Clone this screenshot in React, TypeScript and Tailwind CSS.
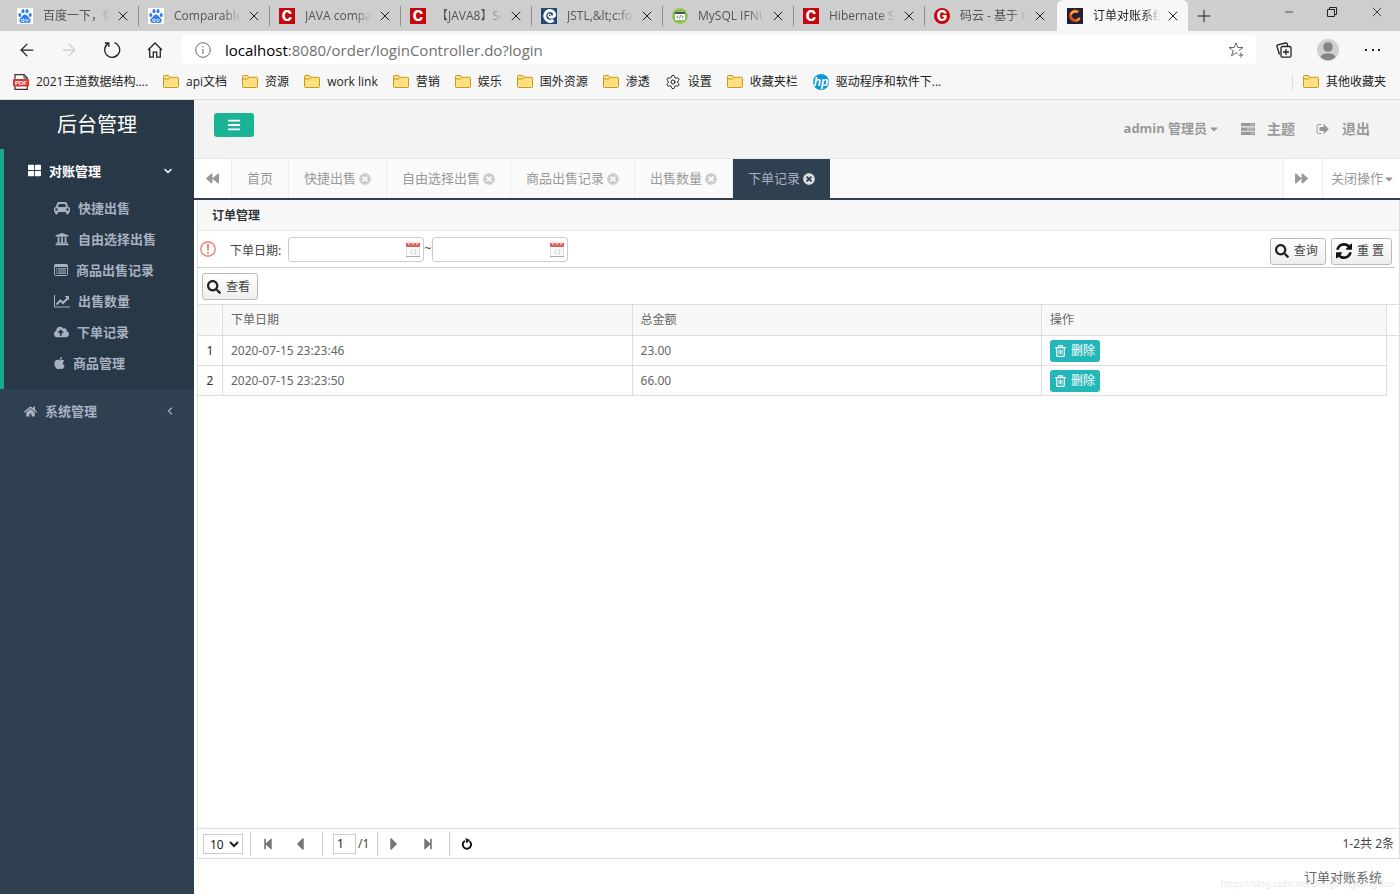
import { ReactNode } from "react"
import { ArrowLeft, ArrowRight, ChevronDown, ChevronLeft, Minus, Plus, Settings, X } from "lucide-react"
import {
    FaApple, FaBackward, FaBars, FaCaretDown, FaCaretLeft, FaCaretRight, FaCloudUploadAlt, FaForward,
    FaHome, FaSearch, FaStepBackward, FaStepForward, FaThLarge, FaTimesCircle, FaUniversity
} from "react-icons/fa"

type IconProps = { className?: string }

const BaiduIcon = () => (
    <svg viewBox="0 0 16 16" className="size-4 shrink-0 bg-white">
        <g fill="#2f7de8">
            <ellipse cx="2.8" cy="7" rx="1.5" ry="2" />
            <ellipse cx="6" cy="3.2" rx="1.5" ry="2.1" />
            <ellipse cx="10" cy="3.2" rx="1.5" ry="2.1" />
            <ellipse cx="13.2" cy="7" rx="1.5" ry="2" />
            <path d="M8 6.4c1.6 0 2.3 1.3 3.4 2.5 1.3 1.3 2.4 2.2 2.2 3.9-.2 1.6-1.6 2.5-3.2 2.2-1.7-.3-3.1-.3-4.8 0-1.600.3-3-.6-3.200-2.200-.2-1.700.9-2.600 2.200-3.900C5.700 7.700 6.400 6.400 8 6.400z" />
        </g>
        <path d="M5.5 11.2H7v2.300H5.500a1.100 1.100 0 010-2.300zM9 10.800v2c0 .9 2 .9 2 0v-2" fill="none" stroke="#fff" strokeWidth=".9" />
    </svg>
)

const LetterIcon = ({ letter, round }: { letter: string, round?: boolean }) => (
    <span className={`flex size-4 shrink-0 items-center justify-center bg-[#c5060d] font-['Inter',sans-serif] text-sm leading-4 font-extrabold text-white ${round ? "rounded-full" : ""}`}>
        {letter}
    </span>
)

const SwirlIcon = () => (
    <svg viewBox="0 0 16 16" className="size-4 shrink-0">
        <rect width="16" height="16" fill="#1c4a7d" />
        <path d="M12.500 12.300A5.500 5.500 0 118 2.500c3-.2 5.400 1.400 5.600 3.900.1 1.700-1.200 2.600-2.500 2.600H8" fill="none" stroke="#fff" strokeWidth="3" />
        <circle cx="8.400" cy="7.400" r="1.900" fill="#fff" />
        <circle cx="8.700" cy="7.300" r=".9" fill="#1c4a7d" />
    </svg>
)

const CodeIcon = () => (
    <svg viewBox="0 0 16 16" className="size-4 shrink-0">
        <circle cx="8" cy="8" r="7.800" fill="#8cc04b" />
        <rect x="3" y="4" width="10" height="8" rx=".5" fill="#fff" />
        <path d="M3 4h10v2H3z" fill="#3d5566" />
        <path d="M6.200 7.500L4.800 9l1.400 1.400M9.800 7.500L11.200 9l-1.400 1.400M8.600 7.300l-1.200 3.300" fill="none" stroke="#3d5566" strokeWidth=".8" />
    </svg>
)

const SystemIcon = () => (
    <svg viewBox="0 0 16 16" className="size-4 shrink-0">
        <rect width="16" height="16" fill="#1d2238" />
        <path d="M11.500 4.200A4.800 4.800 0 1012.500 10" fill="none" stroke="#e2491c" strokeWidth="3" />
        <path d="M10.500 4A4.500 4.500 0 004 6.500" fill="none" stroke="#f8b52c" strokeWidth="2" />
        <path d="M12.800 9.800a5 5 0 01-3.300 3" fill="none" stroke="#f8a02c" strokeWidth="1.600" />
    </svg>
)

const FolderIcon = () => (
    <svg viewBox="0 0 16 13" className="h-[13px] w-4 shrink-0">
        <path d="M.5 1.500a1 1 0 011-1h4l1.500 1.800h7.500a1 1 0 011 1v8.200a1 1 0 01-1 1h-13a1 1 0 01-1-1z" fill="#ffdf80" stroke="#c39a1d" />
        <path d="M1 4h4.500L7 2.500" fill="none" stroke="#c39a1d" />
    </svg>
)

const PdfIcon = () => (
    <svg viewBox="0 0 16 16" className="size-4 shrink-0">
        <path d="M2 .7h9l3.300 3.300v11.300H2z" fill="#fff" stroke="#333" strokeWidth="1.200" />
        <path d="M11 .7V4h3.300" fill="none" stroke="#333" />
        <rect x="0" y="5" width="16" height="7.500" rx="1" fill="#e3342f" />
        <text x="8" y="11" textAnchor="middle" fontSize="6" fontWeight="bold" fontFamily="Liberation Sans" fill="#fff">PDF</text>
    </svg>
)

const HpIcon = () => (
    <svg viewBox="0 0 16 16" className="size-4 shrink-0">
        <circle cx="8" cy="8" r="8" fill="#0f96d6" />
        <text x="8" y="11.500" textAnchor="middle" fontSize="12" fontWeight="bold" fontStyle="italic" fontFamily="Liberation Sans" fill="#fff">hp</text>
    </svg>
)

const ReloadIcon = () => (
    <svg viewBox="0 0 18 18" className="size-[18px]" fill="none" stroke="#222" strokeWidth="1.300">
        <path d="M11.500 1.700A7.500 7.500 0 115 2.600" />
        <path d="M1.800 2h4v4" />
    </svg>
)

const HouseIcon = () => (
    <svg viewBox="0 0 16 16" className="size-4" fill="none" stroke="#222" strokeWidth="1.300">
        <path d="M1 8l7-7 7 7M2.700 6.500v8.700h3.600v-5h3.400v5h3.600V6.500" />
    </svg>
)

const InfoIcon = () => (
    <svg viewBox="0 0 16 16" className="size-4 shrink-0" fill="none" stroke="#666">
        <circle cx="8" cy="8" r="7.300" />
        <path d="M8 7v5M8 4v1.500" />
    </svg>
)

const StarIcon = () => (
    <svg viewBox="0 0 16 16" className="size-4" fill="none" stroke="#666">
        <path d="M9.500 11.500L8 10.700l-4.500 3.200 1.700-5.400L1 5.500h5.200L8 .8l1.800 4.700H15l-4 3M13 10.500v5M10.500 13h5" />
    </svg>
)

const CollectionsIcon = () => (
    <svg viewBox="0 0 16 16" className="size-4" fill="none" stroke="#222" strokeWidth="1.300">
        <rect x="5" y="4.500" width="10" height="10.700" rx="1.500" />
        <path d="M10 7v6M7 10h6M3.500 12.500L1 4.500C.8 3.700 1 3 1.800 2.800L9.500 1c.8-.2 1.500.2 1.700 1l.5 2" />
    </svg>
)

const UserIcon = () => (
    <svg viewBox="0 0 22 22" className="size-[22px]">
        <circle cx="11" cy="11" r="11" fill="#d2d0ce" />
        <circle cx="11" cy="8" r="4.800" fill="#868482" />
        <path d="M3.500 17.500c2-4.500 13-4.500 15 0-3.500 5-11.500 5-15 0z" fill="#868482" />
    </svg>
)

const CarIcon = ({ className }: IconProps) => (
    <svg viewBox="0 0 2048 1792" fill="currentColor" className={className}>
        <path d="M480 1088q0-66-47-113t-113-47-113 47-47 113 47 113 113 47 113-47 47-113zm36-320h1016l-89-357q-2-8-14-17.500t-21-9.500h-768q-9 0-21 9.500t-14 17.500zm1372 320q0-66-47-113t-113-47-113 47-47 113 47 113 113 47 113-47 47-113zm160-96v384q0 14-9 23t-23 9h-96v128q0 80-56 136t-136 56-136-56-56-136v-128h-1024v128q0 80-56 136t-136 56-136-56-56-136v-128h-96q-14 0-23-9t-9-23v-384q0-93 65.500-158.500t158.500-65.500h28l105-419q23-94 104-157.500t179-63.500h768q98 0 179 63.500t104 157.500l105 419h28q93 0 158.500 65.500t65.500 158.500z" />
    </svg>
)

const ListIcon = ({ className }: IconProps) => (
    <svg viewBox="0 0 14 12" className={className}>
        <path d="M1.500.5h11a1 1 0 011 1v9a1 1 0 01-1 1h-11a1 1 0 01-1-1v-9a1 1 0 011-1z" fill="none" stroke="currentColor" />
        <path d="M.5.5h13v2.500H.5zM2 4.300h1.200v1.200H2zM4 4.300h8v1.200H4zM2 6.400h1.200v1.200H2zM4 6.400h8v1.200H4zM2 8.500h1.200v1.200H2zM4 8.500h8v1.200H4z" fill="currentColor" />
    </svg>
)

const ChartIcon = ({ className }: IconProps) => (
    <svg viewBox="0 0 16 14" className={className} fill="none" stroke="currentColor">
        <path d="M.5 1v12H16" />
        <path d="M2.500 10.500l4-4 2.500 2.500 4.700-4.700" strokeWidth="2" />
        <path d="M10.500 2H15v4.500z" fill="currentColor" stroke="none" />
    </svg>
)

const TrashIcon = () => (
    <svg viewBox="0 0 11 12" className="h-3 w-[11px]" fill="none" stroke="#fff" strokeWidth="1.200">
        <path d="M0 2.700h11M3.500 2.500V.8h4v1.700M1.700 3v7.400a1 1 0 001 1h5.600a1 1 0 001-1V3" />
        <path d="M4 4.800v4.500M5.500 4.800v4.500M7 4.800v4.500" strokeWidth=".9" />
    </svg>
)

const TasksIcon = () => (
    <svg viewBox="0 0 14 12" className="h-3 w-[14px]">
        <path d="M0 0h14v3.300H0zM0 4.400h14v3.300H0zM0 8.700h14V12H0z" fill="#999" />
        <path d="M9 1.200h4v1H9zM6 5.500h7v1H6zM10 9.800h3v1h-3z" fill="#d0d0d0" />
    </svg>
)

const SignOutIcon = () => (
    <svg viewBox="0 0 1792 1792" fill="currentColor" className="size-[14px]">
        <path d="M704 1440q0 4 1 20t.5 26.500-3 23.500-10 19.500-20.500 6.500h-320q-119 0-203.500-84.500t-84.500-203.500v-704q0-119 84.500-203.500t203.500-84.500h320q13 0 22.500 9.500t9.500 22.500q0 4 1 20t.5 26.500-3 23.500-10 19.500-20.500 6.500h-320q-66 0-113 47t-47 113v704q0 66 47 113t113 47h312l11.500 1 11.500 3 8 5.500 7 9 2 13.500zm928-544q0 26-19 45l-544 544q-19 19-45 19t-45-19-19-45v-288h-448q-26 0-45-19t-19-45v-384q0-26 19-45t45-19h448v-288q0-26 19-45t45-19 45 19l544 544q19 19 19 45z" />
    </svg>
)

const RefreshIcon = () => (
    <svg viewBox="128 128 1536 1536" fill="#111" className="size-4">
        <path d="M1639 1056q0 5-1 7-64 268-268 434.500t-478 166.500q-146 0-282.500-55t-243.500-157l-129 129q-19 19-45 19t-45-19-19-45v-448q0-26 19-45t45-19h448q26 0 45 19t19 45-19 45l-137 137q71 66 161 102t187 36q134 0 250-65t186-179q11-17 53-117 8-23 30-23h192q13 0 22.500 9.500t9.500 22.500zm25-800v448q0 26-19 45t-45 19h-448q-26 0-45-19t-19-45 19-45l138-138q-148-137-349-137-134 0-250 65t-186 179q-11 17-53 117-8 23-30 23h-199q-13 0-22.500-9.500t-9.500-22.500v-7q65-268 270-434.500t480-166.500q146 0 284 55.500t245 156.500l130-129q19-19 45-19t45 19 19 45z" />
    </svg>
)

const CalendarIcon = () => (
    <svg viewBox="0 0 16 17" className="h-[17px] w-4 shrink-0">
        <rect x="1.500" y="2.500" width="13" height="13" fill="#fafafa" stroke="#ddd" />
        <path d="M1 15.500h14" stroke="#aaa" />
        <path d="M1 2h14v4H1z" fill="#e0615c" />
        <path d="M4 0v3.500M8 0v3.500M12 0v3.500" stroke="#f6dcdb" strokeWidth="1.500" />
        <path d="M6.500 8.500v4M9 9h2v1.500L9 12.500h2" fill="none" stroke="#d5d5d5" />
    </svg>
)

const WarnIcon = () => (
    <svg viewBox="0 0 16 16" className="size-4 shrink-0" fill="none" stroke="#ec6e5c" strokeWidth="1.200">
        <circle cx="8" cy="8" r="7.200" />
        <path d="M8 3v6.500M8 11v1.800" strokeWidth="1.600" />
    </svg>
)

const ReloadPageIcon = () => (
    <svg viewBox="0 0 12 12" className="size-3" fill="none" stroke="#111" strokeWidth="2">
        <path d="M4 2.800A4.200 4.200 0 108.500 3.200" />
        <path d="M4.500 0l4.500 2-3.500 3.500z" fill="#111" stroke="none" />
    </svg>
)

const browserTabs: { icon: ReactNode, title: string }[] = [
    { icon: <BaiduIcon />, title: "百度一下，你" },
    { icon: <BaiduIcon />, title: "Comparable" },
    { icon: <LetterIcon letter="C" />, title: "JAVA compar" },
    { icon: <LetterIcon letter="C" />, title: "【JAVA8】Se" },
    { icon: <SwirlIcon />, title: "JSTL,&lt;c:for" },
    { icon: <CodeIcon />, title: "MySQL IFNU" },
    { icon: <LetterIcon letter="C" />, title: "Hibernate SQ" },
    { icon: <LetterIcon letter="G" round />, title: "码云 - 基于 G" },
    { icon: <SystemIcon />, title: "订单对账系统" },
]

const bookmarks: { icon: ReactNode, title: string }[] = [
    { icon: <PdfIcon />, title: "2021王道数据结构...." },
    { icon: <FolderIcon />, title: "api文档" },
    { icon: <FolderIcon />, title: "资源" },
    { icon: <FolderIcon />, title: "work link" },
    { icon: <FolderIcon />, title: "营销" },
    { icon: <FolderIcon />, title: "娱乐" },
    { icon: <FolderIcon />, title: "国外资源" },
    { icon: <FolderIcon />, title: "渗透" },
    { icon: <Settings className="size-4 shrink-0" strokeWidth={1.5} />, title: "设置" },
    { icon: <FolderIcon />, title: "收藏夹栏" },
    { icon: <HpIcon />, title: "驱动程序和软件下..." },
]

const menu: { icon: ReactNode, title: string }[] = [
    { icon: <CarIcon className="h-[14px] w-4" />, title: "快捷出售" },
    { icon: <FaUniversity className="h-[14px] w-4" />, title: "自由选择出售" },
    { icon: <ListIcon className="h-3 w-[14px]" />, title: "商品出售记录" },
    { icon: <ChartIcon className="h-[14px] w-4" />, title: "出售数量" },
    { icon: <FaCloudUploadAlt className="h-3 w-[15px]" />, title: "下单记录" },
    { icon: <FaApple className="h-[14px] w-[11px]" />, title: "商品管理" },
]

const pageTabs = ["首页", "快捷出售", "自由选择出售", "商品出售记录", "出售数量", "下单记录"]

const orders = [
    { date: "2020-07-15 23:23:46", total: "23.00" },
    { date: "2020-07-15 23:23:50", total: "66.00" },
]

function Browser() {
    return (
        <header className="border-b border-[#d9dcdc] bg-[#f7f7f7] font-['Open_Sans','Noto_Sans_CJK_SC',sans-serif] text-[#222]">
            <div className="flex h-[31px] bg-[#cecece] pl-2">
                {browserTabs.map((tab, i) => {
                    const active = i === browserTabs.length - 1
                    return (
                        <div key={i} className={active
                            ? "ml-px flex w-[131px] items-center rounded-t-md bg-[#f7f7f7] pl-[10px]"
                            : "flex w-[131px] items-center pl-[9px] text-[#555]"}>
                            {tab.icon}
                            <span className="ml-[10px] w-[67px] overflow-hidden [mask-image:linear-gradient(to_right,black_75%,transparent)] text-xs leading-5 whitespace-nowrap">{tab.title}</span>
                            <button aria-label="关闭标签页" className="ml-[5px]"><X className="size-4 text-[#222]" strokeWidth={1.5} /></button>
                            {i < browserTabs.length - 2 && <span className="ml-auto h-5 w-px bg-[#8f8f8f]" />}
                        </div>
                    )
                })}
                <button aria-label="新建标签页" className="ml-[6px]"><Plus className="size-5" strokeWidth={1.2} /></button>
                <div className="mb-2 ml-auto flex items-center gap-[31px] pr-[15px]">
                    <button aria-label="最小化"><Minus className="size-3" strokeWidth={1.5} /></button>
                    <button aria-label="还原">
                        <svg viewBox="0 0 12 12" className="size-3" fill="none" stroke="#222"><path d="M1.500 3.500h7v7h-7zM3.500 3.500v-2h7v7h-2" /></svg>
                    </button>
                    <button aria-label="关闭"><X className="size-4" strokeWidth={1.2} /></button>
                </div>
            </div>
            <div className="flex h-[37px] items-center pr-5 pl-[17px]">
                <button aria-label="后退"><ArrowLeft className="size-5" strokeWidth={1.5} /></button>
                <button aria-label="前进" className="ml-[22px]"><ArrowRight className="size-5 text-[#ccc]" strokeWidth={1.5} /></button>
                <button aria-label="刷新" className="ml-6"><ReloadIcon /></button>
                <button aria-label="主页" className="ml-[26px]"><HouseIcon /></button>
                <div className="ml-[19px] flex h-[29px] flex-1 items-center rounded bg-white pr-3 pl-[13px]">
                    <InfoIcon />
                    <p className="ml-[14px] flex-1 text-[15px] leading-5 text-[#707070]"><span className="text-black">localhost</span>:8080/order/loginController.do?login</p>
                    <button aria-label="收藏"><StarIcon /></button>
                </div>
                <button aria-label="集锦" className="ml-5"><CollectionsIcon /></button>
                <button aria-label="个人资料" className="ml-[25px]"><UserIcon /></button>
                <button aria-label="更多" className="ml-[26px] flex w-[15px] justify-between">
                    <span className="size-[2px] bg-[#222]" /><span className="size-[2px] bg-[#222]" /><span className="size-[2px] bg-[#222]" />
                </button>
            </div>
            <nav className="flex h-[31px] items-center gap-[15px] pb-1 pr-[14px] pl-[13px] text-xs whitespace-nowrap">
                {bookmarks.map((item, i) => (
                    <a key={i} href="#" className="flex items-center gap-[7px]">{item.icon}{item.title}</a>
                ))}
                <a href="#" className="ml-auto flex items-center gap-[7px] border-l border-[#ddd] pl-[10px]"><FolderIcon />其他收藏夹</a>
            </nav>
        </header>
    )
}

function Sidebar() {
    return (
        <aside className="w-[194px] shrink-0 bg-[#2f4050] text-[13px] leading-5 font-bold text-[#a7b1c2]">
            <h1 className="h-[49px] bg-[#293846] pt-[9px] text-center text-xl leading-8 font-normal text-white">后台管理</h1>
            <div className="border-l-4 border-[#19aa8d] bg-[#293846] pb-[11px]">
                <a href="#" className="flex h-[43px] items-center pl-6 text-white">
                    <FaThLarge className="size-[13px]" />
                    <span className="ml-2 flex-1">对账管理</span>
                    <ChevronDown className="mr-5 size-3" strokeWidth={3} />
                </a>
                <ul>
                    {menu.map((item) => (
                        <li key={item.title}>
                            <a href="#" className="flex h-[31px] items-center gap-2 pl-[50px]">{item.icon}{item.title}</a>
                        </li>
                    ))}
                </ul>
            </div>
            <a href="#" className="flex h-11 items-center pl-6">
                <FaHome className="size-[13px]" />
                <span className="ml-2 flex-1">系统管理</span>
                <ChevronLeft className="mr-[18px] size-3" strokeWidth={2.5} />
            </a>
        </aside>
    )
}

function TopBar() {
    return (
        <div className="flex h-[59px] items-start border-b border-[#e7e7e7] bg-[#f3f3f4] pt-[13px] pr-[30px] pl-5">
            <button aria-label="菜单" className="flex h-6 w-10 items-center justify-center rounded-[3px] bg-[#1ab394] text-white"><FaBars className="size-[14px]" /></button>
            <div className="ml-auto flex h-8 items-center text-[13px] font-bold text-[#999]">
                <button className="flex items-center">admin 管理员<FaCaretDown className="ml-px size-3" /></button>
                <a href="#" className="ml-[21px] flex items-center gap-3 text-sm"><TasksIcon />主题</a>
                <a href="#" className="ml-[21px] flex items-center gap-3 text-sm"><SignOutIcon />退出</a>
            </div>
        </div>
    )
}

function PageTabs() {
    return (
        <div className="flex h-[41px] border-b-2 border-[#2f4050] bg-[#fafafa] text-[13px] text-[#999]">
            <button aria-label="向左" className="flex w-[38px] items-center justify-center border-r border-[#eee] bg-white"><FaBackward className="size-[13px]" /></button>
            {pageTabs.map((title, i) => (
                <a key={title} href="#" className={i === pageTabs.length - 1
                    ? "flex items-center bg-[#2f4050] px-[15px] text-[#a7b1c2]"
                    : "flex items-center border-r border-[#eee] px-[15px]"}>
                    {title}
                    {i > 0 && <FaTimesCircle className={i === pageTabs.length - 1 ? "ml-[3px] size-3 text-[#ddd]" : "ml-[3px] size-3 text-[#ccc]"} />}
                </a>
            ))}
            <button aria-label="向右" className="ml-auto flex w-10 items-center border-x border-[#eee] bg-white pl-[11px]"><FaForward className="size-[13px]" /></button>
            <button className="flex w-[77px] items-center bg-white pl-2 whitespace-nowrap">关闭操作<FaCaretDown className="size-3" /></button>
        </div>
    )
}

function ToolButton({ icon, children }: { icon: ReactNode, children: ReactNode }) {
    return (
        <button className="flex h-[27px] items-center gap-[5px] rounded-[3px] border border-[#bbb] bg-linear-to-b from-white to-[#eee] pr-[7px] pl-1 text-[#444]">
            {icon}{children}
        </button>
    )
}

function DateField({ label }: { label: string }) {
    return (
        <span className="flex h-[25px] w-[136px] items-center rounded-[3px] border border-[#ccc] bg-white pr-[2px]">
            <input aria-label={label} className="h-full min-w-0 flex-1 px-2 outline-none" />
            <CalendarIcon />
        </span>
    )
}

function OrderPanel() {
    return (
        <section className="ml-[3px] flex flex-1 flex-col border-x border-b border-[#ddd] bg-white text-xs text-[#444]">
            <h2 className="h-[31px] border-b border-[#e5e5e5] bg-[#f8f8f8] pl-[14px] leading-8 font-bold text-[#333]">订单管理</h2>
            <form className="mr-1 flex h-[37px] items-center border-b border-[#ccc] pl-[2px]">
                <WarnIcon />
                <span className="ml-[14px] w-[58px] pt-1 whitespace-nowrap">下单日期:</span>
                <DateField label="开始日期" />
                <span className="w-2 text-center">~</span>
                <DateField label="结束日期" />
                <div className="ml-auto flex gap-[5px] pt-1 pr-[3px]">
                    <ToolButton icon={<FaSearch className="size-[14px] text-[#222]" />}>查询</ToolButton>
                    <ToolButton icon={<RefreshIcon />}>重 置</ToolButton>
                </div>
            </form>
            <div className="flex h-9 items-center pt-px pl-1">
                <ToolButton icon={<FaSearch className="size-[14px] text-[#222]" />}>查看</ToolButton>
            </div>
            <div className="flex-1 border-t border-[#ddd]">
                <table className="w-full table-fixed border-separate border-spacing-0 text-left text-[#666]">
                    <colgroup>
                        <col className="w-[25px]" />
                        <col className="w-[34.1%]" />
                        <col className="w-[34.1%]" />
                        <col />
                        <col className="w-3" />
                    </colgroup>
                    <thead>
                        <tr className="h-[31px] bg-[#f8f8f8] *:border-b *:border-[#ddd] *:font-normal">
                            <th className="border-r" />
                            <th className="border-r pl-2">下单日期</th>
                            <th className="border-r pl-2">总金额</th>
                            <th className="border-r pl-2">操作</th>
                            <th className="bg-white" />
                        </tr>
                    </thead>
                    <tbody>
                        {orders.map((order, i) => (
                            <tr key={order.date} className="h-[30px] *:border-[#ddd]">
                                <td className="border-r border-b text-center text-[#333]">{i + 1}</td>
                                <td className="border-r border-b pl-2">{order.date}</td>
                                <td className="border-r border-b pl-2">{order.total}</td>
                                <td className="border-r border-b pl-2">
                                    <button className="flex h-[22px] w-[50px] items-center gap-[5px] rounded-[3px] bg-[#23b7b9] pl-[5px] whitespace-nowrap text-white">
                                        <TrashIcon />删除
                                    </button>
                                </td>
                                <td />
                            </tr>
                        ))}
                    </tbody>
                </table>
            </div>
            <div className="flex h-[30px] items-center border-t border-[#ddd] pr-[5px] pl-[5px]">
                <select aria-label="每页条数" className="h-5 w-10 border border-[#ccc] bg-white pl-[2px] text-[#222]">
                    <option>10</option>
                    <option>20</option>
                </select>
                <div className="ml-[7px] flex h-6 w-[73px] items-center justify-between border-x border-[#ccc] pr-3 pl-[11px] text-[#777]">
                    <button aria-label="第一页"><FaStepBackward className="size-3" /></button>
                    <button aria-label="上一页"><FaCaretLeft className="size-5" /></button>
                </div>
                <input aria-label="页码" defaultValue="1" className="ml-[10px] h-5 w-[23px] border border-[#ccc] pl-[3px] text-[#222]" />
                <span className="ml-[2px]">/1</span>
                <div className="ml-2 flex h-6 w-[73px] items-center justify-between border-x border-[#ccc] pr-[15px] pl-[6px] text-[#777]">
                    <button aria-label="下一页"><FaCaretRight className="size-5" /></button>
                    <button aria-label="最后一页"><FaStepForward className="size-3" /></button>
                </div>
                <button aria-label="刷新列表" className="ml-[11px]"><ReloadPageIcon /></button>
                <span className="ml-auto">1-2共 2条</span>
            </div>
        </section>
    )
}

export default function App() {
    return (
        <div className="flex min-h-screen flex-col bg-white font-['Noto_Sans','Noto_Sans_CJK_SC',sans-serif]">
            <Browser />
            <div className="flex flex-1">
                <Sidebar />
                <main className="flex min-w-0 flex-1 flex-col">
                    <TopBar />
                    <PageTabs />
                    <OrderPanel />
                    <footer className="relative h-[35px] pt-2 pr-[18px] text-right text-[13px] leading-5 text-[#666]">
                        订单对账系统
                        <span className="absolute right-[6px] bottom-[2px] text-[9px] leading-4 text-[#ddd]/70">https://blog.csdn.net/dengdengdengduo</span>
                    </footer>
                </main>
            </div>
        </div>
    )
}
